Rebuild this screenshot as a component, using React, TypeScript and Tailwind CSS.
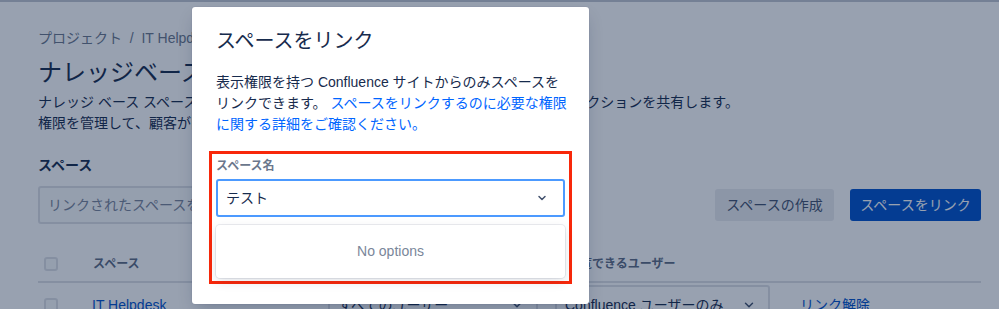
import { ChevronDown } from 'lucide-react';

const font = { fontFamily: '"Liberation Sans", "Noto Sans CJK JP", sans-serif' };

function Checkbox() {
  return <div className="h-[14px] w-[14px] rounded-[3px] border-2 border-[#dfe1e6] bg-[#fafbfc]" />;
}

function Select({ label, width }: { label: string; width: string }) {
  return (
    <div
      className={`flex h-[40px] items-center justify-between rounded-[3px] border-2 border-[#dfe1e6] bg-white pl-[8px] pr-[12px] text-[14px] text-[#172b4d] ${width}`}
    >
      <span className="whitespace-nowrap">{label}</span>
      <ChevronDown size={14} strokeWidth={2.5} className="text-[#42526e]" />
    </div>
  );
}

function Page() {
  return (
    <div className="h-[309px] overflow-hidden bg-white">
      <div className="h-[2px] bg-[#c1c7d0]" />
      <div className="pl-[38px] pr-[18px] pt-[26px]">
        <div className="text-[14px] leading-[20px] text-[#6b778c]">
          プロジェクト&nbsp;&nbsp;/&nbsp;&nbsp;IT Helpdesk
        </div>
        <h1 className="mt-[11px] text-[24px] leading-[28px] text-[#172b4d]">ナレッジベース</h1>
        <p className="mt-[5px] text-[14px] leading-[21px] text-[#172b4d]">
          ナレッジ ベース スペースをリンクし、サービス プロジェクト顧客とナレッジ ベース セクションを共有します。
          <br />
          権限を管理して、顧客が閲覧できる記事を制御します。
        </p>
        <h2 className="mt-[21px] text-[14px] font-bold leading-[20px] text-[#172b4d]">スペース</h2>
        <div className="mt-[11px] flex items-center">
          <div className="flex h-[38px] w-[440px] items-center rounded-[3px] border-2 border-[#dfe1e6] bg-[#fafbfc] px-[8px] text-[14px] text-[#7a869a]">
            リンクされたスペースを検索
          </div>
          <div className="flex-1" />
          <button className="h-[32px] w-[119px] rounded-[3px] bg-[#ebecf0] text-[14px] text-[#42526e]">
            スペースの作成
          </button>
          <button className="ml-[16px] h-[32px] w-[131px] rounded-[3px] bg-[#0052cc] text-[14px] text-white">
            スペースをリンク
          </button>
        </div>
        <div className="mt-[23px] grid h-[36px] grid-cols-[54px_236px_227px_1fr] items-center border-b-2 border-[#dfe1e6] text-[12px] font-bold text-[#5e6c84]">
          <div className="pl-[6px]">
            <Checkbox />
          </div>
          <div className="pl-[1px]">スペース</div>
          <div>アクセスできる顧客</div>
          <div className="pl-[13px]">閲覧できるユーザー</div>
        </div>
        <div className="mt-[2px] grid grid-cols-[54px_236px_227px_245px_1fr] items-center">
          <div className="pl-[6px]">
            <Checkbox />
          </div>
          <div className="text-[14px] text-[#0052cc]">IT Helpdesk</div>
          <Select label="すべてのユーザー" width="w-[210px]" />
          <Select label="Confluence ユーザーのみ" width="w-[215px]" />
          <div className="text-[14px] text-[#0052cc]">リンク解除</div>
        </div>
      </div>
    </div>
  );
}

function LinkSpaceModal() {
  return (
    <div className="absolute left-[192px] top-[7px] h-[297px] w-[397px] rounded-[3px] bg-white px-6 pt-[22px] shadow-[0_8px_16px_-4px_rgba(9,30,66,0.25),0_0_1px_rgba(9,30,66,0.31)]">
      <h2 className="text-[20px] leading-[24px] text-[#172b4d]">スペースをリンク</h2>
      <p className="mt-[19px] whitespace-nowrap text-[14px] leading-[21px] text-[#172b4d]">
        表示権限を持つ Confluence サイトからのみスペースを
        <br />
        リンクできます。{' '}
        <span className="text-[#0065ff]">
          スペースをリンクするのに必要な権限
          <br />
          に関する詳細をご確認ください。
        </span>
      </p>
      <div className="-mx-[7px] mt-[16px] border-[3px] border-[#f8280a] px-[4px] pb-[3px] pt-[4px]">
        <div className="text-[12px] font-bold leading-[16px] text-[#6b778c]">スペース名</div>
        <div className="mt-[5px] flex h-[38px] items-center justify-between rounded-[3px] border-2 border-[#4c9aff] bg-white pl-[8px] pr-[15px]">
          <span className="text-[14px] text-[#172b4d]">テスト</span>
          <ChevronDown size={12} strokeWidth={3} className="text-[#42526e]" />
        </div>
        <div className="mt-[8px] flex h-[53px] items-center justify-center rounded-[4px] bg-white shadow-[0_0_0_1px_rgba(9,30,66,0.08),0_4px_11px_rgba(9,30,66,0.12)]">
          <span className="text-[14px] text-[#7a869a]">No options</span>
        </div>
      </div>
    </div>
  );
}

export default function App() {
  return (
    <div className="relative h-[309px] w-[999px] overflow-hidden" style={font}>
      <Page />
      <div className="absolute inset-0 bg-[rgba(9,30,66,0.42)]" />
      <LinkSpaceModal />
    </div>
  );
}
